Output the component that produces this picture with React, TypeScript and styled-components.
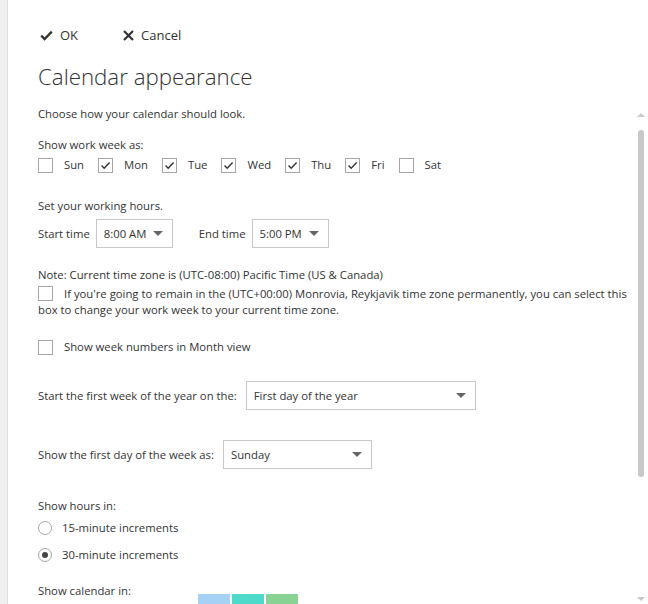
import React from "react";
import styled, { createGlobalStyle } from "styled-components";

const FONT = `"Open Sans", "Segoe UI", "Liberation Sans", sans-serif`;

const Global = createGlobalStyle`
  html, body { margin: 0; padding: 0; background: #ffffff; }
  body { font-family: ${FONT}; color: #333333; }
  * { box-sizing: border-box; }
`;

const Page = styled.div`
  display: flex;
  width: 648px;
  height: 604px;
  overflow: hidden;
  background: #ffffff;
`;

const SideStrip = styled.div`
  width: 8px;
  flex: none;
  background: #f0f0f0;
  border-right: 1px solid #dddddd;
`;

const Main = styled.div`
  flex: 1;
  display: flex;
  flex-direction: column;
  min-width: 0;
`;

const Toolbar = styled.div`
  display: flex;
  align-items: center;
  gap: 45px;
  height: 30px;
  margin-top: 20px;
  padding-left: 32px;
`;

const ToolButton = styled.button`
  display: flex;
  align-items: center;
  gap: 7px;
  padding: 0;
  border: 0;
  background: none;
  font-family: ${FONT};
  font-size: 13px;
  color: #333333;
  cursor: pointer;
`;

const Title = styled.h1`
  margin: 12px 0 0 30px;
  font-family: ${FONT};
  font-weight: 300;
  font-size: 22.3px;
  line-height: 30px;
  color: #333333;
`;

const ScrollArea = styled.div`
  flex: 1;
  display: flex;
  margin-top: 14px;
  min-height: 0;
`;

const Content = styled.div`
  flex: 1;
  padding-left: 30px;
  font-size: 11.3px;
  line-height: 16px;
  color: #333333;
`;

const Line = styled.div<{ $mt?: number }>`
  margin-top: ${(p) => p.$mt ?? 0}px;
`;

const DayRow = styled.div`
  display: flex;
  align-items: center;
  gap: 14px;
  margin-top: 4px;
`;

const CheckLabel = styled.label`
  display: flex;
  align-items: center;
  gap: 11px;
`;

const Box = styled.span`
  display: inline-flex;
  align-items: center;
  justify-content: center;
  width: 15px;
  height: 15px;
  flex: none;
  border: 1px solid #a6a6a6;
  background: #ffffff;
  vertical-align: top;
`;

const InlineBox = styled(Box)`
  margin-right: 11px;
`;

const FieldRow = styled.div<{ $mt: number; $gap?: number }>`
  display: flex;
  align-items: center;
  gap: ${(p) => p.$gap ?? 6}px;
  margin-top: ${(p) => p.$mt}px;
`;

const Spacer = styled.span<{ $w: number }>`
  width: ${(p) => p.$w}px;
  flex: none;
`;

const Select = styled.div<{ $w: number }>`
  display: flex;
  align-items: center;
  justify-content: space-between;
  width: ${(p) => p.$w}px;
  height: 29px;
  padding: 0 9px 0 7px;
  border: 1px solid #c8c8c8;
  background: #ffffff;
  color: #333333;
`;

const Caret = styled.span`
  width: 0;
  height: 0;
  border-left: 5px solid transparent;
  border-right: 5px solid transparent;
  border-top: 5px solid #666666;
`;

const Para = styled.div<{ $mt: number }>`
  margin-top: ${(p) => p.$mt}px;
  padding-right: 6px;
`;

const RadioRow = styled.label<{ $mt: number }>`
  display: flex;
  align-items: center;
  gap: 10px;
  height: 16px;
  margin-top: ${(p) => p.$mt}px;
`;

const Radio = styled.span<{ $on?: boolean }>`
  display: flex;
  align-items: center;
  justify-content: center;
  width: 14px;
  height: 14px;
  border: 1px solid #a6a6a6;
  border-radius: 50%;
  background: #ffffff;
  &::after {
    content: "";
    width: 6px;
    height: 6px;
    border-radius: 50%;
    background: ${(p) => (p.$on ? "#444444" : "transparent")};
  }
`;

const SwatchRow = styled.div`
  display: flex;
  gap: 2px;
  margin: -5px 0 0 160px;
`;

const Swatch = styled.div<{ $c: string }>`
  width: 32px;
  height: 30px;
  background: ${(p) => p.$c};
`;

const ScrollTrack = styled.div`
  width: 10px;
  flex: none;
  margin-right: 2px;
  display: flex;
  flex-direction: column;
  align-items: center;
  padding: 7px 0 3px;
`;

const ArrowUp = styled.span`
  width: 0;
  height: 0;
  border-left: 4px solid transparent;
  border-right: 4px solid transparent;
  border-bottom: 4px solid #c8c8c8;
`;

const ArrowDown = styled.span`
  width: 0;
  height: 0;
  margin-top: auto;
  border-left: 4px solid transparent;
  border-right: 4px solid transparent;
  border-top: 4px solid #c8c8c8;
`;

const Thumb = styled.div`
  width: 6px;
  height: 347px;
  margin-top: 13px;
  border-radius: 3px;
  background: #c8c8c8;
`;

const CheckMark = () => (
  <svg width="11" height="11" viewBox="0 0 11 11">
    <path d="M1.5 5.6 L4.2 8.3 L9.6 2.6" fill="none" stroke="#333" strokeWidth="1.4" />
  </svg>
);

const OkIcon = () => (
  <svg width="13" height="11" viewBox="0 0 13 11">
    <path d="M1.2 5.6 L4.6 9 L11.8 1.6" fill="none" stroke="#333" strokeWidth="2.3" />
  </svg>
);

const CancelIcon = () => (
  <svg width="11" height="11" viewBox="0 0 11 11">
    <path d="M1 1 L10 10 M10 1 L1 10" fill="none" stroke="#333" strokeWidth="2.2" />
  </svg>
);

const days: [string, boolean][] = [
  ["Sun", false],
  ["Mon", true],
  ["Tue", true],
  ["Wed", true],
  ["Thu", true],
  ["Fri", true],
  ["Sat", false],
];

export default function App() {
  return (
    <>
      <Global />
      <Page>
        <SideStrip />
        <Main>
          <Toolbar>
            <ToolButton>
              <OkIcon />
              OK
            </ToolButton>
            <ToolButton>
              <CancelIcon />
              Cancel
            </ToolButton>
          </Toolbar>
          <Title>Calendar appearance</Title>
          <ScrollArea>
            <Content>
              <Line>Choose how your calendar should look.</Line>
              <Line $mt={15}>Show work week as:</Line>
              <DayRow>
                {days.map(([d, on]) => (
                  <CheckLabel key={d}>
                    <Box>{on && <CheckMark />}</Box>
                    {d}
                  </CheckLabel>
                ))}
              </DayRow>
              <Line $mt={25}>Set your working hours.</Line>
              <FieldRow $mt={5}>
                Start time
                <Select $w={77}>
                  8:00 AM
                  <Caret />
                </Select>
                <Spacer $w={14} />
                End time
                <Select $w={77}>
                  5:00 PM
                  <Caret />
                </Select>
              </FieldRow>
              <Line $mt={19}>Note: Current time zone is (UTC-08:00) Pacific Time (US &amp; Canada)</Line>
              <Para $mt={3}>
                <InlineBox />
                If you're going to remain in the (UTC+00:00) Monrovia, Reykjavik time zone permanently, you can select this
                box to change your work week to your current time zone.
              </Para>
              <Line $mt={21}>
                <CheckLabel>
                  <Box />
                  Show week numbers in Month view
                </CheckLabel>
              </Line>
              <FieldRow $mt={26} $gap={9}>
                Start the first week of the year on the:
                <Select $w={230}>
                  First day of the year
                  <Caret />
                </Select>
              </FieldRow>
              <FieldRow $mt={30} $gap={9}>
                Show the first day of the week as:
                <Select $w={149}>
                  Sunday
                  <Caret />
                </Select>
              </FieldRow>
              <Line $mt={29}>Show hours in:</Line>
              <RadioRow $mt={6}>
                <Radio />
                15-minute increments
              </RadioRow>
              <RadioRow $mt={11}>
                <Radio $on />
                30-minute increments
              </RadioRow>
              <Line $mt={20}>Show calendar in:</Line>
              <SwatchRow>
                <Swatch $c="#a6d1f4" />
                <Swatch $c="#4ddacb" />
                <Swatch $c="#88d293" />
              </SwatchRow>
            </Content>
            <ScrollTrack>
              <ArrowUp />
              <Thumb />
              <ArrowDown />
            </ScrollTrack>
          </ScrollArea>
        </Main>
      </Page>
    </>
  );
}
